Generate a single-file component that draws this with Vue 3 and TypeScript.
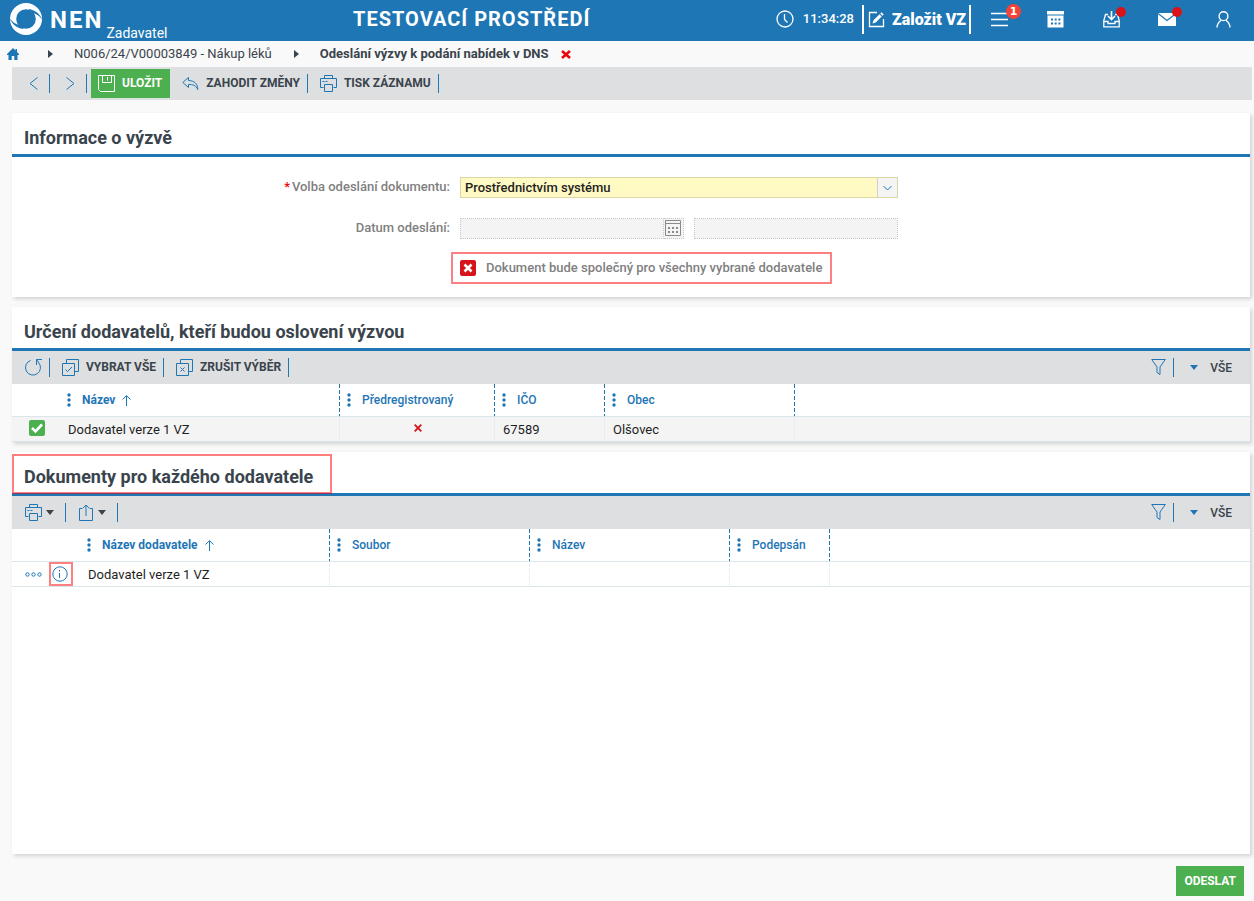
<script setup lang="ts">
import { ref } from 'vue'

interface Column {
  label: string
  cls: string
  sorted?: boolean
}

const sendMode = ref('system')
const shared = ref(false)
const supplierSelected = ref(true)

const supplierColumns: Column[] = [
  { label: 'Název', cls: 'w-name', sorted: true },
  { label: 'Předregistrovaný', cls: 'w-prereg' },
  { label: 'IČO', cls: 'w-ico' },
  { label: 'Obec', cls: 'w-town' },
]
const documentColumns: Column[] = [
  { label: 'Název dodavatele', cls: 'w-supplier', sorted: true },
  { label: 'Soubor', cls: 'w-file' },
  { label: 'Název', cls: 'w-file' },
  { label: 'Podepsán', cls: 'w-signed' },
]
</script>

<template>
  <div class="page">
    <header class="topbar">
      <a class="brand" href="#">
        <svg class="logo" width="34" height="34" viewBox="0 0 34 34" aria-hidden="true">
          <circle cx="17" cy="17" r="16" fill="#fff" />
          <circle cx="17" cy="17" r="9.800" fill="#1e76b5" />
          <path d="M19 7C25 7.500 30 10.500 33.800 18C30 13.500 27.500 12 24 11ZM15 27C9 26.500 4 23.500 .2 16C4 20.500 6.500 22 10 23Z" fill="#1e76b5" />
        </svg>
        <span class="brand-name">NEN</span>
        <span class="brand-role">Zadavatel</span>
      </a>
      <div class="env">TESTOVACÍ PROSTŘEDÍ</div>
      <div class="clock">
        <svg width="18" height="18" viewBox="0 0 18 18" fill="none" stroke="#fff" stroke-width="1.300">
          <circle cx="9" cy="9" r="8" />
          <path d="M8.500 4V9.500L11.500 12.500" />
        </svg>
        <span>11:34:28</span>
      </div>
      <button class="create" type="button">
        <svg width="17" height="17" viewBox="0 0 17 17">
          <path d="M9 1.500H1.500V15.500H15.500V8" fill="none" stroke="#fff" stroke-width="1.300" />
          <path d="M4.500 12.500L5.500 9.300L11.500 3.300L13.700 5.500L7.700 11.500ZM12.200 2.600L13.600 1.200L15.800 3.400L14.400 4.800Z" fill="#fff" />
        </svg>
        <span>Založit VZ</span>
      </button>
      <nav class="top-icons">
        <button type="button" aria-label="Úkoly">
          <svg width="17" height="17" viewBox="0 0 17 17" stroke="#fff" stroke-width="1.600">
            <path d="M0 2.500H17M0 8.500H17M0 14.500H17" />
          </svg>
          <span class="count">1</span>
        </button>
        <button type="button" aria-label="Kalendář">
          <svg width="17" height="17" viewBox="0 0 17 17">
            <path d="M0 0H17V3.500H0ZM0.500 4.500H16.500V16.500H.5Z" fill="#fff" />
            <path d="M4 8.500H14M4 12.500H14" stroke="#1e76b5" stroke-width="2" stroke-dasharray="2 1.700" />
          </svg>
        </button>
        <button type="button" aria-label="Příchozí">
          <svg width="17" height="17" viewBox="0 0 17 17" fill="none" stroke="#fff" stroke-width="1.300">
            <path d="M5 3.500H2.500L.8 9.500V15.800H16.200V9.500L14.500 3.500H12" />
            <path d="M1 10.500H5V12.500H12V10.500H16" />
            <path d="M8.500 0V8M5 5L8.500 8.500L12 5" stroke-width="1.600" />
          </svg>
          <span class="dot"></span>
        </button>
        <button type="button" aria-label="Zprávy">
          <svg width="18" height="17" viewBox="0 0 18 17">
            <path d="M0 2H18V15H0Z" fill="#fff" />
            <path d="M0 2.500L9 9.500L18 2.500" fill="none" stroke="#1e76b5" stroke-width="1.200" />
          </svg>
          <span class="dot"></span>
        </button>
        <button type="button" aria-label="Uživatel">
          <svg width="15" height="17" viewBox="0 0 15 17" fill="none" stroke="#fff" stroke-width="1.400">
            <circle cx="7.500" cy="5.200" r="4.400" />
            <path d="M1 16.500C1 12.500 3.500 10.500 5 9.300M14 16.500C14 12.500 11.500 10.500 10 9.300" />
          </svg>
        </button>
      </nav>
    </header>

    <nav class="crumbs">
      <a class="home" href="#" aria-label="Domů">
        <svg width="12" height="12" viewBox="0 0 12 12" fill="#1e76b5">
          <path d="M6 0L8.500 2.400V1H10V4L12 6V7H10.500V12H7.300V8H4.700V12H1.500V7H0V6Z" />
        </svg>
      </a>
      <svg class="sep" width="5" height="8" viewBox="0 0 5 8" fill="#3a444c"><path d="M0 0L5 4L0 8Z" /></svg>
      <a class="crumb" href="#">N006/24/V00003849 - Nákup léků</a>
      <svg class="sep" width="5" height="8" viewBox="0 0 5 8" fill="#3a444c"><path d="M0 0L5 4L0 8Z" /></svg>
      <span class="current">Odeslání výzvy k podání nabídek v DNS</span>
      <button class="close" type="button" aria-label="Zavřít">
        <svg width="10" height="9" viewBox="0 0 10 9" stroke="#e8050b" stroke-width="2.600"><path d="M1 1L9 8M9 1L1 8" /></svg>
      </button>
    </nav>

    <div class="toolbar main-bar">
      <button class="tool nav-tool" type="button" aria-label="Předchozí">
        <svg width="9" height="13" viewBox="0 0 9 13"><path d="M8.500 .5L1 6.500L8.500 12.500" /></svg>
      </button>
      <span class="rule"></span>
      <button class="tool nav-tool next" type="button" aria-label="Další">
        <svg width="9" height="13" viewBox="0 0 9 13"><path d="M.5 .5L8 6.500L.5 12.500" /></svg>
      </button>
      <span class="rule"></span>
      <button class="save" type="button">
        <svg width="17" height="17" viewBox="0 0 17 17" fill="none" stroke="#fff">
          <path d="M.5 .5H16.500V16.500H2.500L.5 14.500ZM4.500 .5V7.500H13.500V.5M9.500 2V5.500" />
        </svg>
        <span>ULOŽIT</span>
      </button>
      <button class="tool" type="button">
        <svg width="17" height="17" viewBox="0 0 17 17">
          <path d="M6.500 2.500L.8 7.500L6.500 12.500V9.500C11 9.300 14 10.500 15.800 14.500C15.800 9 12.500 5.700 6.500 5.500Z" />
        </svg>
        <span>ZAHODIT ZMĚNY</span>
      </button>
      <span class="rule"></span>
      <button class="tool" type="button">
        <svg width="17" height="17" viewBox="0 0 17 17">
          <path d="M3.500 12.500H.5V3.500H16.500V12.500H13.500M4.500 3.500V.5H12.500V3.500M4.500 9.500H12.500V16.500H4.500ZM2.500 6.500H4.500M5.500 6.500H7.500" />
        </svg>
        <span>TISK ZÁZNAMU</span>
      </button>
      <span class="rule"></span>
    </div>

    <main class="content">
      <section class="panel">
        <h2>Informace o výzvě</h2>
        <form class="form" @submit.prevent>
          <label for="mode"><span class="req">*</span>Volba odeslání dokumentu:</label>
          <div class="select">
            <select id="mode" v-model="sendMode">
              <option value="system">Prostřednictvím systému</option>
            </select>
            <span class="select-arrow">
              <svg width="9" height="6" viewBox="0 0 9 6" fill="none" stroke="#1e76b5"><path d="M.5 1L4.500 5L8.500 1" /></svg>
            </span>
          </div>
          <label for="date">Datum odeslání:</label>
          <div class="dates">
            <div class="date">
              <input id="date" type="text" disabled />
              <button type="button" disabled aria-label="Vybrat datum">
                <svg width="16" height="16" viewBox="0 0 16 16" fill="none" stroke="#8a8a8a">
                  <path d="M.5 .5H15.500V15.500H.5ZM.5 3.500H15.500" />
                  <path d="M3 8H13M3 12H13" stroke-width="2" stroke-dasharray="2 2" />
                </svg>
              </button>
            </div>
            <input class="time" type="text" disabled aria-label="Čas odeslání" />
          </div>
          <label class="shared" for="shared">
            <span class="check">
              <input id="shared" v-model="shared" type="checkbox" />
              <svg v-if="shared" width="16" height="16" viewBox="0 0 16 16"><path d="M3 8L6.500 11.500L13 4.500" /></svg>
              <svg v-else width="16" height="16" viewBox="0 0 16 16"><path d="M4.500 4.500L11.500 11.500M11.500 4.500L4.500 11.500" /></svg>
            </span>
            <span>Dokument bude společný pro všechny vybrané dodavatele</span>
          </label>
        </form>
      </section>

      <section class="panel">
        <h2>Určení dodavatelů, kteří budou oslovení výzvou</h2>
        <div class="toolbar">
          <button class="tool first" type="button" aria-label="Obnovit">
            <svg width="17" height="17" viewBox="0 0 17 17">
              <path d="M5.500 1.500A7.500 7.500 0 1 0 13.500 3.500M17 .5H11.500V6M11.500 .5L14 4" />
            </svg>
          </button>
          <span class="rule"></span>
          <button class="tool" type="button">
            <svg width="17" height="17" viewBox="0 0 17 17">
              <path d="M.5 4.500H12.500V16.500H.5ZM4.500 4.500V.5H16.500V12.500H12.500M3.500 10.500L5.500 12.500L10 8" />
            </svg>
            <span>VYBRAT VŠE</span>
          </button>
          <span class="rule"></span>
          <button class="tool" type="button">
            <svg width="17" height="17" viewBox="0 0 17 17">
              <path d="M.5 4.500H12.500V16.500H.5ZM4.500 4.500V.5H16.500V12.500H12.500M4.500 8.500L8.500 12.500M8.500 8.500L4.500 12.500" />
            </svg>
            <span>ZRUŠIT VÝBĚR</span>
          </button>
          <span class="rule"></span>
          <div class="view">
            <button class="tool filter" type="button" aria-label="Filtr">
              <svg width="15" height="17" viewBox="0 0 15 17"><path d="M.7 .5H14.300L9 8V15.500L6 13.500V8Z" /></svg>
            </button>
            <span class="rule"></span>
            <button class="tool all" type="button">
              <svg width="8" height="5" viewBox="0 0 8 5"><path class="solid" d="M0 0H8L4 5Z" /></svg>
              <span>VŠE</span>
            </button>
          </div>
        </div>
        <table class="grid">
          <thead>
            <tr>
              <th class="w-check"></th>
              <th v-for="c in supplierColumns" :key="c.label" :class="['col', c.cls]">
                <span class="head">
                  <svg width="4" height="14" viewBox="0 0 4 14" fill="#1e76b5"><circle cx="2" cy="2" r="1.700" /><circle cx="2" cy="7" r="1.700" /><circle cx="2" cy="12" r="1.700" /></svg>
                  <span :class="{ sorted: c.sorted }">{{ c.label }}</span>
                  <svg v-if="c.sorted" width="9" height="11" viewBox="0 0 9 11" fill="none" stroke="#1e76b5"><path d="M4.500 11V1M.5 4.500L4.500 .7L8.500 4.500" /></svg>
                </span>
              </th>
              <th></th>
            </tr>
          </thead>
          <tbody>
            <tr class="shade">
              <td class="center">
                <span class="check">
                  <input v-model="supplierSelected" type="checkbox" aria-label="Vybrat dodavatele" />
                  <svg v-if="supplierSelected" width="16" height="16" viewBox="0 0 16 16"><path d="M3 8L6.500 11.500L13 4.500" /></svg>
                  <svg v-else width="16" height="16" viewBox="0 0 16 16"><path d="M4.500 4.500L11.500 11.500M11.500 4.500L4.500 11.500" /></svg>
                </span>
              </td>
              <td class="line">Dodavatel verze 1 VZ</td>
              <td class="line center">
                <svg class="no" width="8" height="8" viewBox="0 0 8 8" stroke="#d8141b" stroke-width="1.800"><path d="M.7 .7L7.300 7.300M7.300 .7L.7 7.300" /></svg>
              </td>
              <td class="line">67589</td>
              <td class="line">Olšovec</td>
              <td></td>
            </tr>
          </tbody>
        </table>
      </section>

      <section class="panel grow">
        <h2 class="marked">Dokumenty pro každého dodavatele</h2>
        <div class="toolbar">
          <button class="tool first drop" type="button" aria-label="Tisk">
            <svg width="17" height="17" viewBox="0 0 17 17">
              <path d="M3.500 12.500H.5V3.500H16.500V12.500H13.500M4.500 3.500V.5H12.500V3.500M4.500 9.500H12.500V16.500H4.500ZM2.500 6.500H4.500M5.500 6.500H7.500" />
            </svg>
            <svg width="8" height="5" viewBox="0 0 8 5"><path class="dark" d="M0 0H8L4 5Z" /></svg>
          </button>
          <span class="rule"></span>
          <button class="tool drop share" type="button" aria-label="Export">
            <svg width="14" height="17" viewBox="0 0 14 17">
              <path d="M3.500 4.500H.5V16.500H13.500V4.500H10.500M7 12V1M4 4L7 1L10 4" />
            </svg>
            <svg width="8" height="5" viewBox="0 0 8 5"><path class="dark" d="M0 0H8L4 5Z" /></svg>
          </button>
          <span class="rule"></span>
          <div class="view">
            <button class="tool filter" type="button" aria-label="Filtr">
              <svg width="15" height="17" viewBox="0 0 15 17"><path d="M.7 .5H14.300L9 8V15.500L6 13.500V8Z" /></svg>
            </button>
            <span class="rule"></span>
            <button class="tool all" type="button">
              <svg width="8" height="5" viewBox="0 0 8 5"><path class="solid" d="M0 0H8L4 5Z" /></svg>
              <span>VŠE</span>
            </button>
          </div>
        </div>
        <table class="grid">
          <thead>
            <tr>
              <th class="w-actions"></th>
              <th v-for="(c, i) in documentColumns" :key="i" :class="['col', c.cls]">
                <span class="head">
                  <svg width="4" height="14" viewBox="0 0 4 14" fill="#1e76b5"><circle cx="2" cy="2" r="1.700" /><circle cx="2" cy="7" r="1.700" /><circle cx="2" cy="12" r="1.700" /></svg>
                  <span :class="{ sorted: c.sorted }">{{ c.label }}</span>
                  <svg v-if="c.sorted" width="9" height="11" viewBox="0 0 9 11" fill="none" stroke="#1e76b5"><path d="M4.500 11V1M.5 4.500L4.500 .7L8.500 4.500" /></svg>
                </span>
              </th>
              <th></th>
            </tr>
          </thead>
          <tbody>
            <tr>
              <td class="actions-cell">
                <div class="actions">
                  <button class="more" type="button" aria-label="Akce">
                    <svg width="17" height="5" viewBox="0 0 17 5" fill="none" stroke="#1e76b5"><circle cx="2.500" cy="2.500" r="1.700" /><circle cx="8.500" cy="2.500" r="1.700" /><circle cx="14.500" cy="2.500" r="1.700" /></svg>
                  </button>
                  <button class="info" type="button" aria-label="Detail">
                    <svg width="16" height="16" viewBox="0 0 16 16" fill="none" stroke="#1e76b5"><circle cx="8" cy="8" r="7.200" /><path d="M7.500 4V5.500M7.500 7V12" /></svg>
                  </button>
                </div>
              </td>
              <td class="line">Dodavatel verze 1 VZ</td>
              <td class="line"></td>
              <td class="line"></td>
              <td class="line"></td>
              <td></td>
            </tr>
          </tbody>
        </table>
      </section>
    </main>

    <footer class="footer">
      <button class="send" type="button">ODESLAT</button>
    </footer>
  </div>
</template>

<style>
body {
  margin: 0;
  background: #f9f9f9;
}
</style>

<style scoped>
.page {
  display: flex;
  flex-direction: column;
  min-height: 100vh;
  font: 13px/16px Roboto, "Liberation Sans", sans-serif;
  color: #3a444c;
  background: #f9f9f9;
}
*,
*::before,
*::after {
  box-sizing: border-box;
}
button {
  margin: 0;
  padding: 0;
  border: 0;
  background: none;
  font: inherit;
  color: inherit;
  cursor: pointer;
}
svg {
  display: block;
  flex: none;
}
a {
  color: inherit;
  text-decoration: none;
}

.topbar {
  display: flex;
  align-items: center;
  height: 41px;
  padding: 0 3px 0 9px;
  background: #1e76b5;
  color: #fff;
}
.brand {
  display: flex;
  height: 41px;
}
.logo {
  margin: 2px 7px 0 0;
}
.brand-name {
  margin-right: 3px;
  font-size: 24px;
  line-height: 40px;
  font-weight: 700;
  letter-spacing: 2px;
}
.brand-role {
  align-self: flex-end;
  font-size: 14px;
}
.env {
  flex: 1;
  padding-bottom: 3px;
  text-align: center;
  font-size: 20px;
  line-height: 24px;
  font-weight: 700;
  letter-spacing: 1px;
}
.clock {
  display: flex;
  align-items: center;
  gap: 9px;
  padding-bottom: 3px;
  margin-right: 8px;
  font-weight: 500;
}
.create {
  display: flex;
  align-items: center;
  gap: 7px;
  height: 29px;
  margin-bottom: 2px;
  padding: 0 3px 0 4px;
  border: solid #fff;
  border-width: 0 2px;
  font-size: 16px;
  font-weight: 900;
}
.top-icons {
  display: flex;
}
.top-icons button {
  position: relative;
  display: flex;
  align-items: center;
  justify-content: center;
  width: 56px;
  height: 38px;
  margin-bottom: 3px;
}
.count {
  position: absolute;
  top: 4px;
  left: 35px;
  width: 15px;
  height: 15px;
  border-radius: 50%;
  background: #f44336;
  font: 700 11px/15px "DejaVu Sans", sans-serif;
}
.dot {
  position: absolute;
  top: 7px;
  left: 33px;
  width: 10px;
  height: 10px;
  border-radius: 50%;
  background: #dc1219;
}

.crumbs {
  display: flex;
  align-items: center;
  height: 26px;
  padding-left: 7px;
}
.sep {
  margin: 0 21px 0 29px;
}
.crumb + .sep {
  margin-left: 22px;
}
.current {
  font-weight: 700;
}
.close {
  margin-left: 12px;
}

.toolbar {
  display: flex;
  align-items: center;
  height: 33px;
  background: #dedfe1;
  font-size: 12px;
  font-weight: 500;
}
.main-bar {
  margin: 0 2px 13px 12px;
}
.rule {
  width: 1px;
  height: 19px;
  background: #1e76b5;
}
.tool {
  display: flex;
  align-items: center;
  gap: 7px;
  height: 29px;
  padding: 0 7px 0 12px;
  font-weight: 700;
}
.tool svg {
  fill: none;
  stroke: #1e76b5;
}
.tool span {
  padding-bottom: 1px;
}
.tool.first {
  padding: 0 7px 0 13px;
}
.nav-tool {
  padding: 0 11px 0 17px;
}
.nav-tool.next {
  padding-left: 16px;
}
.tool .solid {
  fill: #1e76b5;
  stroke: none;
}
.tool .dark {
  fill: #3a444c;
  stroke: none;
}
.tool.drop {
  gap: 4px;
  padding-right: 11px;
}
.tool.share {
  gap: 5px;
  padding-left: 13px;
}
.save {
  display: flex;
  align-items: center;
  gap: 7px;
  height: 29px;
  padding: 0 8px 0 7px;
  margin-left: 4px;
  background: #4caf50;
  color: #fff;
  font-weight: 700;
}
.save span {
  padding-bottom: 1px;
}
.view {
  display: flex;
  align-items: center;
  margin-left: auto;
}
.tool.all {
  gap: 12px;
  padding: 0 18px 0 16px;
  font-weight: 500;
}
.tool.all span {
  padding: 0;
}

.content {
  display: flex;
  flex: 1;
  flex-direction: column;
  gap: 10px;
  margin: 0 4px 0 12px;
}
.panel {
  background: #fff;
  box-shadow: 2px 2px 4px rgba(0, 0, 0, 0.16);
}
.panel.grow {
  flex: 1;
}
h2 {
  position: relative;
  margin: 0;
  padding: 14px 12px 6px;
  border-bottom: 3px solid #1e76b5;
  font-size: 18px;
  line-height: 21px;
  font-weight: 700;
}
.marked::after {
  content: "";
  position: absolute;
  top: 2px;
  left: 0;
  width: 320px;
  height: 40px;
  border: 2px solid rgba(255, 0, 0, 0.5);
}

.form {
  display: grid;
  grid-template-columns: 438fr 438fr 342fr;
  column-gap: 10px;
  padding: 20px 0 13px;
  color: #7f7f7f;
  font-weight: 500;
}
.form > label {
  grid-column: 1;
  height: 41px;
  line-height: 20px;
  text-align: right;
}
.req {
  margin-right: 2px;
  color: #e8050b;
}
.select {
  display: flex;
  position: relative;
  height: 21px;
}
.select select {
  width: 100%;
  height: 21px;
  padding: 0 24px 0 4px;
  border: 1px solid #dbd6a3;
  border-radius: 0;
  appearance: none;
  background: #fff9c4;
  color: #1f1f1f;
  font: 500 13px/19px Roboto, "Liberation Sans", sans-serif;
}
.select-arrow {
  position: absolute;
  top: 1px;
  right: 1px;
  display: flex;
  align-items: center;
  justify-content: center;
  width: 20px;
  height: 19px;
  border-left: 1px solid #d0d0c8;
  background: #f4f4f4;
  pointer-events: none;
}
.dates {
  display: grid;
  grid-template-columns: 224fr 204fr;
  gap: 10px;
}
.dates input {
  width: 100%;
  height: 21px;
  border: 1px dotted #c8c8c8;
  background: #f4f4f4;
}
.date {
  display: flex;
  height: 21px;
}
.date input {
  flex: 1;
  min-width: 0;
}
.date button {
  width: 20px;
  padding: 0 0 1px 1px;
  border: 1px dotted #c8c8c8;
  border-left: 0;
  background: #f4f4f4;
}
.form > .shared {
  grid-column: 2 / 4;
  justify-self: start;
  display: flex;
  align-items: center;
  gap: 10px;
  height: 32px;
  margin: -7px 0 0 -9px;
  padding: 0 8px 0 7px;
  border: 2px solid #ff8080;
}
.check {
  position: relative;
  display: inline-block;
  width: 16px;
  height: 16px;
  vertical-align: top;
}
.check input {
  display: block;
  width: 16px;
  height: 16px;
  margin: 0;
  border-radius: 2px;
  appearance: none;
  background: #d8141b;
}
.check input:checked {
  background: #4caf50;
}
.check svg {
  position: absolute;
  inset: 0;
  fill: none;
  stroke: #fff;
  stroke-width: 2.6;
  pointer-events: none;
}

.grid {
  width: 100%;
  table-layout: fixed;
  border-collapse: separate;
  border-spacing: 0;
  color: #1f1f1f;
}
.grid th {
  height: 33px;
  padding: 0;
  border-bottom: 1px solid #dce6ea;
  text-align: left;
  font-size: 12px;
  font-weight: 500;
  color: #1e76b5;
}
.grid th.col {
  background: repeating-linear-gradient(#1e76b5 0 4px, transparent 4px 6px) right / 1px 100% no-repeat;
}
.grid td {
  height: 25px;
  padding: 1px 8px 0;
  border-bottom: 1px solid #dce6ea;
}
.grid td.line {
  border-right: 1px dotted #dce6ea;
}
.grid .shade td {
  background: #f4f4f4;
}
.grid td.center {
  padding: 0 0 2px 1px;
  text-align: center;
}
.head {
  display: flex;
  align-items: center;
  gap: 11px;
  padding-left: 7px;
}
.head svg + span + svg {
  margin-left: -4px;
}
.sorted {
  font-weight: 700;
}
.no {
  margin: 0 auto;
}
.w-check { width: 48px; }
.w-name { width: 280px; }
.w-prereg { width: 155px; }
.w-ico { width: 110px; }
.w-town { width: 190px; }
.w-actions { width: 68px; }
.w-supplier { width: 250px; }
.w-file { width: 200px; }
.w-signed { width: 100px; }
.grid td.actions-cell {
  padding: 0;
}
.actions {
  display: flex;
  align-items: center;
  gap: 7px;
  height: 24px;
  padding-left: 13px;
}
.info {
  display: flex;
  align-items: center;
  justify-content: center;
  width: 24px;
  height: 24px;
  border: 2px solid #ff8080;
}
.info svg {
  margin-right: 2px;
}

.footer {
  display: flex;
  justify-content: flex-end;
  padding: 12px 10px 5px;
}
.send {
  height: 30px;
  padding: 0 8px;
  background: #4caf50;
  color: #fff;
  font-size: 12px;
  font-weight: 700;
}
</style>
